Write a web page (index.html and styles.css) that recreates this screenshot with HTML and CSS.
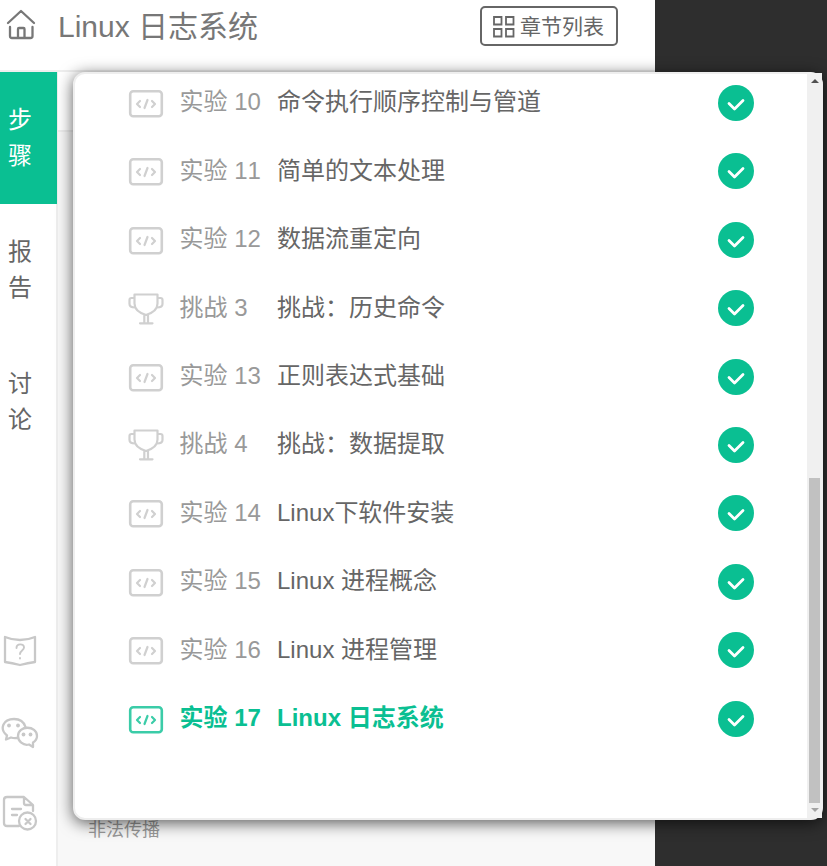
FILE: index.html
```html
<!DOCTYPE html>
<html lang="zh-CN">
<head>
<meta charset="utf-8">
<title>Linux 日志系统</title>
<link rel="stylesheet" href="styles.css">
</head>
<body>
<svg class="defs" aria-hidden="true">
  <symbol id="code" viewBox="0 0 36 30"><rect x="2.200" y="2.200" width="31.600" height="25" rx="3" stroke-width="2.600"/><path d="M12 12 9 15l3 3M24 12 27 15l-3 3M19.500 11l-3 8" stroke-width="2.200"/></symbol>
  <symbol id="cup" viewBox="0 0 36 34"><path d="M6.500 2.500h23v9c0 6-5 9.500-11.500 11.500C11.500 21 6.500 17.500 6.500 11.500zM6.500 6H3.500Q1.500 6 1.500 8v4q0 3.500 5.500 3.500M29.500 6h3q2 0 2 2v4q0 3.500-5.500 3.500M16.300 23v8M20 23v8M12 31.300h12.500" stroke-width="2.200"/></symbol>
  <symbol id="check" viewBox="0 0 36 36"><circle cx="18" cy="18" r="18" fill="#0abf92" stroke="none"/><path d="m11 18.500 5.500 5.500 8.500-8.500" stroke="#fff" stroke-width="2.800"/></symbol>
</svg>
<div class="app">
  <header class="header">
    <svg class="home" viewBox="0 0 30 32"><path d="M2 15 15 3l13 12M4 19v9q0 2 2 2h18.500q2 0 2-2v-9M12 30v-9q0-1 1-1h4.500q1 0 1 1v9"/></svg>
    <h1>Linux 日志系统</h1>
    <button class="chapters"><svg viewBox="0 0 22 22"><path d="M1 1h7.500v7.500H1zM13 1h7.500v7.500H13zM1 13h7.500v7.500H1zM13 13h7.500v7.500H13z"/></svg>章节列表</button>
  </header>
  <div class="main">
    <nav class="side">
      <a class="tab active">步<br>骤</a>
      <a class="tab">报<br>告</a>
      <a class="tab">讨<br>论</a>
      <div class="tools">
        <svg viewBox="0 0 40 40"><path d="M5 6q7 3 15 3t15-3v25q-7 1-15 3-8-2-15-3z"/><path class="thin" d="M16.500 17c0-5 7.500-4.500 7.500-.5 0 3-4 3-4 6.500M20 27v.5"/></svg>
        <svg viewBox="0 0 40 40"><path d="M17 26q-3 .5-6-.5l-5 2 1-4C-1 17 3 7 14 7q9 0 11.500 8M18 24c0-11 19-11 19 0 0 3-1.500 5-4 6.500V35l-4-2.500C23 34 18 29 18 24z"/><g class="dots"><circle cx="9" cy="13.500" r="1.900"/><circle cx="18" cy="13.500" r="1.900"/><circle cx="23.500" cy="22.500" r="1.900"/><circle cx="30.500" cy="22.500" r="1.900"/></g></svg>
        <svg viewBox="0 0 40 40"><path d="M19 33H7q-3 0-3-3V7q0-3 3-3h17l9 8v6M24 5v5q0 2 2 2h6M12 16h9M12 22h5"/><circle cx="27.500" cy="28" r="8.500"/><path class="cross" d="m25.500 26 5 5m0-5-5 5"/></svg>
      </div>
    </nav>
    <section class="content">
      <div class="content-head"></div>
      <p class="notice">非法传播</p>
    </section>
  </div>
</div>
<div class="popup">
  <ul class="list">
    <li><svg class="kind"><use href="#code"/></svg><span class="no">实验 10</span><span class="name">命令执行顺序控制与管道</span><svg class="done"><use href="#check"/></svg></li>
    <li><svg class="kind"><use href="#code"/></svg><span class="no">实验 11</span><span class="name">简单的文本处理</span><svg class="done"><use href="#check"/></svg></li>
    <li><svg class="kind"><use href="#code"/></svg><span class="no">实验 12</span><span class="name">数据流重定向</span><svg class="done"><use href="#check"/></svg></li>
    <li><svg class="kind cup"><use href="#cup"/></svg><span class="no">挑战 3</span><span class="name">挑战：历史命令</span><svg class="done"><use href="#check"/></svg></li>
    <li><svg class="kind"><use href="#code"/></svg><span class="no">实验 13</span><span class="name">正则表达式基础</span><svg class="done"><use href="#check"/></svg></li>
    <li><svg class="kind cup"><use href="#cup"/></svg><span class="no">挑战 4</span><span class="name">挑战：数据提取</span><svg class="done"><use href="#check"/></svg></li>
    <li><svg class="kind"><use href="#code"/></svg><span class="no">实验 14</span><span class="name">Linux下软件安装</span><svg class="done"><use href="#check"/></svg></li>
    <li><svg class="kind"><use href="#code"/></svg><span class="no">实验 15</span><span class="name">Linux 进程概念</span><svg class="done"><use href="#check"/></svg></li>
    <li><svg class="kind"><use href="#code"/></svg><span class="no">实验 16</span><span class="name">Linux 进程管理</span><svg class="done"><use href="#check"/></svg></li>
    <li class="current"><svg class="kind"><use href="#code"/></svg><span class="no">实验 17</span><span class="name">Linux 日志系统</span><svg class="done"><use href="#check"/></svg></li>
  </ul>
  <div class="scrollbar"><i class="up"></i><div class="thumb"></div><i class="down"></i></div>
</div>
</body>
</html>
```
FILE: styles.css
```css
* { box-sizing: border-box; }
body { margin: 0; height: 866px; overflow: hidden; background: #2e2e2e; font-family: "Liberation Sans", "Noto Sans CJK SC", sans-serif; color: #666; font-kerning: none; }
svg { fill: none; stroke: currentColor; stroke-width: 2; stroke-linecap: round; stroke-linejoin: round; flex: none; }
.defs { position: absolute; width: 0; height: 0; }
.app { width: 655px; height: 866px; background: #fff; display: flex; flex-direction: column; }
.header { height: 72px; border-bottom: 2px solid #eee; display: flex; align-items: flex-start; padding: 0 37px 0 6px; color: #777; }
.home { width: 30px; height: 32px; margin-top: 8px; stroke-width: 2.300; }
h1 { margin: 5px 0 0 22px; font-size: 30px; line-height: 44px; font-weight: 400; flex: 1; white-space: nowrap; }
.chapters { display: flex; align-items: center; width: 138px; height: 40px; margin-top: 6px; padding: 2px 0 0 11px; gap: 5px; border: 2px solid #666; border-radius: 5px; background: #fff; color: #666; font: 21px/36px "Liberation Sans", "Noto Sans CJK SC", sans-serif; white-space: nowrap; }
.chapters svg { width: 22px; height: 22px; stroke-linejoin: miter; stroke-width: 1.800; }
.main { display: flex; flex: 1; min-height: 0; }
.side { width: 58px; border-right: 2px solid #eee; display: flex; flex-direction: column; }
.tab { width: 57px; height: 132px; padding: 30px 0 0 8px; font-size: 24px; line-height: 36px; }
.tab.active { padding-top: 29.500px; background: #0abf92; color: #fff; }
.tools { display: flex; flex-direction: column; gap: 41px; margin-top: 163px; color: #c8c8c8; }
.tools svg { width: 40px; height: 40px; stroke-width: 2.300; }
.tools .thin { stroke-width: 1.900; }
.dots { fill: currentColor; stroke: none; }
.content { flex: 1; background: #f8f8f8; display: flex; flex-direction: column; justify-content: space-between; }
.content-head { height: 60px; background: #fff; border-bottom: 2px solid #eee; }
.notice { margin: 0 0 22px 30px; font-size: 18px; line-height: 28px; color: #999; }
.popup { position: absolute; left: 73px; top: 72px; width: 750px; height: 748px; display: flex; border: 2px solid #eee; border-radius: 12px; background: #fff; box-shadow: 0 3px 16px rgba(0,0,0,.65); }
.list { list-style: none; margin: -5.200px 0 0; padding: 0; flex: 1; }
.list li { height: 68.400px; padding: 0 53px; display: flex; align-items: center; font-size: 24px; line-height: 36px; color: #666; white-space: nowrap; }
.kind { width: 36px; height: 30px; color: #d0d0d0; margin-top: 2px; }
.kind.cup { height: 34px; margin-top: 1px; }
.no { width: 97.500px; margin: -1.200px 0 0 15.500px; color: #999; }
.name { flex: 1; margin-top: -1.200px; }
.done { width: 36px; height: 36px; }
.list .current, .current .no { color: #0abf92; }
.current .kind { color: #3bcca8; }
.current { font-weight: 700; }
.scrollbar { width: 15px; height: 745px; margin: -1px -1px 0 0; background: #f0f0f0; display: flex; flex-direction: column; align-items: center; }
.scrollbar i { border: 4px solid transparent; width: 0; height: 0; }
.scrollbar .up { border-bottom-color: #505050; border-top: 0; margin-top: 6px; }
.thumb { width: 11px; height: 325px; margin: 395px 0 5px; background: #c1c1c1; }
.scrollbar .down { border-top-color: #a3a3a3; border-bottom: 0; }
```
